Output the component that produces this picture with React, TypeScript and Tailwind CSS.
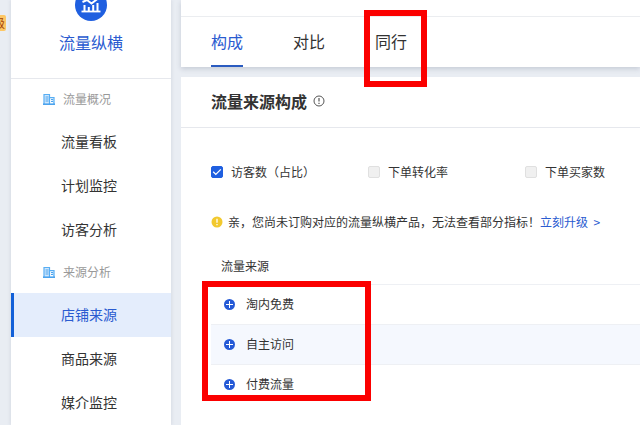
import { useState } from 'react';

const menu = [
  { title: '流量概况', items: ['流量看板', '计划监控', '访客分析'] },
  { title: '来源分析', items: ['店铺来源', '商品来源', '媒介监控'] },
];

const tabs = ['构成', '对比', '同行'];
const metrics = ['访客数（占比）', '下单转化率', '下单买家数'];
const sources = ['淘内免费', '自主访问', '付费流量'];

function Logo() {
  return (
    <svg viewBox="0 0 32 32" className="size-8" aria-hidden="true">
      <circle cx="16" cy="16" r="16" fill="#1f5fe0" />
      <g stroke="#fff" fill="none">
        <path d="M6.5 22.5h19" strokeWidth="1.8" />
        <path d="M9.5 22v-6M13.8 22v-4M18.2 22v-6M22.5 22v-8" strokeWidth="2" />
        <path d="M7.5 13l4.5-2 4.5 3.5 6.5-5" strokeWidth="2" />
      </g>
    </svg>
  );
}

function BuildingIcon() {
  return (
    <svg viewBox="0 0 12 12" className="size-3" aria-hidden="true">
      <path d="M1 11V1.5h5.5V11M6.5 4.5H11V11" fill="#cfe7fc" stroke="#58aef3" strokeWidth="1.2" />
      <path d="M0 11.2h12" stroke="#4ba3ee" strokeWidth="1.6" />
      <path d="M2.5 4h3M2.5 6h3M2.5 8h3M8 6.5h2M8 8.5h2" stroke="#4ba3ee" />
    </svg>
  );
}

function PlusIcon() {
  return (
    <svg viewBox="0 0 11 11" className="size-[11px]" aria-hidden="true">
      <circle cx="5.5" cy="5.5" r="5.5" fill="#2459d6" />
      <path d="M2 5.5h7M5.5 2v7" stroke="#fff" />
    </svg>
  );
}

function Sidebar() {
  const [active, setActive] = useState('店铺来源');

  return (
    <aside className="w-40 shrink-0 overflow-hidden bg-white shadow-[0_0_4px_rgba(60,70,100,0.15)]">
      <div className="-mt-[11px] flex h-[90px] flex-col items-center border-b border-[#e6e8ed]">
        <Logo />
        <h1 className="mt-[9px] text-base leading-6 text-[#2a5bd0]">流量纵横</h1>
      </div>
      <nav>
        {menu.map((group) => (
          <section key={group.title}>
            <h2 className="flex h-[41px] items-center gap-2 pb-0.5 pl-8 text-xs text-[#999]">
              <BuildingIcon />
              {group.title}
            </h2>
            {group.items.map((item) => (
              <a
                key={item}
                href="#"
                onClick={() => setActive(item)}
                className={
                  item === active
                    ? 'flex h-11 items-center border-l-3 border-[#1260d8] bg-[#e4edfc] pb-0.5 pl-[47px] text-sm text-[#2a5bd0]'
                    : 'flex h-11 items-center border-l-3 border-transparent pb-0.5 pl-[47px] text-sm text-[#333]'
                }
              >
                {item}
              </a>
            ))}
          </section>
        ))}
      </nav>
    </aside>
  );
}

function TabBar() {
  const [tab, setTab] = useState(tabs[0]);

  return (
    <header className="bg-white pt-4 shadow-[0_2px_5px_rgba(60,70,100,0.2)]">
      <div className="flex h-[51px] gap-[50px] border-t border-[#ebedf0] pl-[30px]" role="tablist">
        {tabs.map((t) => (
          <div key={t} className="relative flex">
            <button
              role="tab"
              aria-selected={t === tab}
              onClick={() => setTab(t)}
              className={
                t === tab
                  ? 'border-b-2 border-[#2a5bc0] text-base text-[#2a5bd0]'
                  : 'border-b-2 border-transparent text-base text-[#333]'
              }
            >
              {t}
            </button>
            {t === '同行' && (
              <div className="pointer-events-none absolute -top-[7px] -left-[11px] z-10 h-[77px] w-[63px] border-6 border-[#fb0000]" />
            )}
          </div>
        ))}
      </div>
    </header>
  );
}

function SourcePanel() {
  const [checked, setChecked] = useState([metrics[0]]);

  const toggle = (m: string) =>
    setChecked(checked.includes(m) ? checked.filter((c) => c !== m) : [...checked, m]);

  return (
    <section className="flex-1 bg-white">
      <div className="flex h-[51px] items-center gap-1.5 border-b border-[#e6e8ed] pb-0.5 pl-[30px]">
        <h2 className="text-base font-bold text-[#333]">流量来源构成</h2>
        <svg viewBox="0 0 12 12" className="size-3" fill="none" stroke="#555" aria-hidden="true">
          <circle cx="6" cy="6" r="5" />
          <path d="M6 3v3.5M6 7.8v1.2" strokeWidth="1.2" />
        </svg>
      </div>

      <div className="pl-[30px] text-xs text-[#333]">
        <div className="flex h-[88px] items-center">
          {metrics.map((m) => (
            <label key={m} className="flex w-[157px] shrink-0 items-center gap-2">
              <span className="grid size-3">
                <input
                  type="checkbox"
                  checked={checked.includes(m)}
                  onChange={() => toggle(m)}
                  className="col-start-1 row-start-1 size-3 appearance-none rounded-xs border border-[#e0e0e0] bg-[#f0f0f0] checked:border-[#1f5fe0] checked:bg-[#1f5fe0]"
                />
                <svg viewBox="0 0 12 12" className="pointer-events-none col-start-1 row-start-1 size-3" aria-hidden="true">
                  {checked.includes(m) && <path d="M2.2 5.8l2.6 2.6 5-5" fill="none" stroke="#fff" strokeWidth="1.3" />}
                </svg>
              </span>
              {m}
            </label>
          ))}
        </div>

        <p className="flex h-3 items-center whitespace-nowrap">
          <svg viewBox="0 0 12 12" className="mr-[5px] size-3 shrink-0" aria-hidden="true">
            <circle cx="6" cy="6" r="5.5" fill="#f2c92e" />
            <path d="M6 2.8v4M6 8v1.3" stroke="#fff" strokeWidth="1.3" />
          </svg>
          亲，您尚未订购对应的流量纵横产品，无法查看部分指标！
          <a href="#" className="text-[#2a5bd0]">立刻升级 &nbsp;&gt;</a>
        </p>

        <div className="relative mt-[18px]">
          <table className="w-full">
            <thead>
              <tr className="h-[38px] border-b border-[#eef0f4]">
                <th className="pt-0.5 pl-2.5 text-left font-normal">流量来源</th>
              </tr>
            </thead>
            <tbody>
              {sources.map((s) => (
                <tr key={s} className="h-10 border-b border-[#eef0f4] last:border-b-0 even:bg-[#f5f8fe]">
                  <td className="pl-[13px]">
                    <button className="flex items-center gap-[11px]">
                      <PlusIcon />
                      {s}
                    </button>
                  </td>
                </tr>
              ))}
            </tbody>
          </table>
          <div className="pointer-events-none absolute top-[35px] -left-[9px] h-[120px] w-[169px] border-6 border-[#fb0000]" />
        </div>
      </div>
    </section>
  );
}

export default function App() {
  return (
    <div className="flex h-screen overflow-hidden bg-[#e9edf3] font-['Noto_Sans_CJK_SC',sans-serif]">
      <div className="w-[11px] shrink-0 overflow-hidden pt-[15px]">
        <span className="flex h-4 w-1.5 items-center justify-end rounded-r-xs bg-[#fdc765] pr-px text-xs text-[#a8480c]">级</span>
      </div>
      <Sidebar />
      <main className="ml-2.5 flex min-w-0 flex-1 flex-col gap-2.5">
        <TabBar />
        <SourcePanel />
      </main>
    </div>
  );
}
